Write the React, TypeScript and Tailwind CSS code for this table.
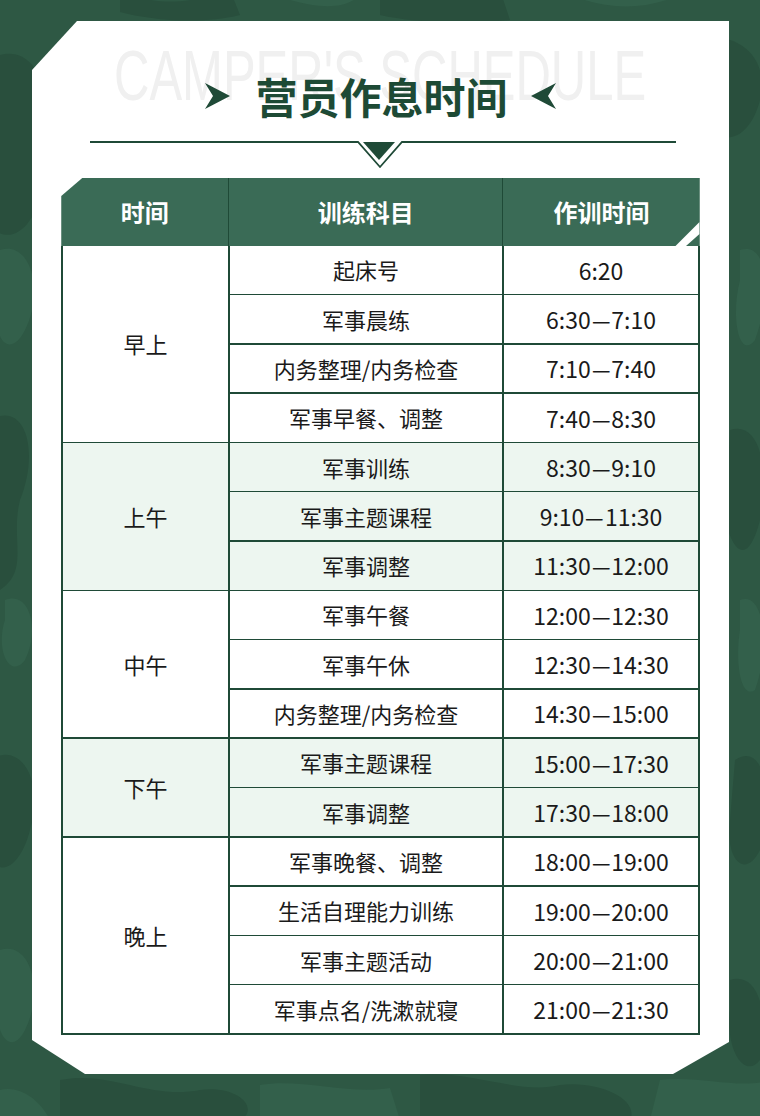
import React from "react";

type Row = { item: string; time: string };
type Group = { label: string; tint: boolean; rows: Row[] };

const groups: Group[] = [
  {
    label: "早上",
    tint: false,
    rows: [
      { item: "起床号", time: "6:20" },
      { item: "军事晨练", time: "6:30—7:10" },
      { item: "内务整理/内务检查", time: "7:10—7:40" },
      { item: "军事早餐、调整", time: "7:40—8:30" },
    ],
  },
  {
    label: "上午",
    tint: true,
    rows: [
      { item: "军事训练", time: "8:30—9:10" },
      { item: "军事主题课程", time: "9:10—11:30" },
      { item: "军事调整", time: "11:30—12:00" },
    ],
  },
  {
    label: "中午",
    tint: false,
    rows: [
      { item: "军事午餐", time: "12:00—12:30" },
      { item: "军事午休", time: "12:30—14:30" },
      { item: "内务整理/内务检查", time: "14:30—15:00" },
    ],
  },
  {
    label: "下午",
    tint: true,
    rows: [
      { item: "军事主题课程", time: "15:00—17:30" },
      { item: "军事调整", time: "17:30—18:00" },
    ],
  },
  {
    label: "晚上",
    tint: false,
    rows: [
      { item: "军事晚餐、调整", time: "18:00—19:00" },
      { item: "生活自理能力训练", time: "19:00—20:00" },
      { item: "军事主题活动", time: "20:00—21:00" },
      { item: "军事点名/洗漱就寝", time: "21:00—21:30" },
    ],
  },
];

const spanClass: Record<number, string> = {
  2: "row-span-2",
  3: "row-span-3",
  4: "row-span-4",
};

function Time({ t }: { t: string }) {
  const parts = t.split("—");
  if (parts.length === 1) return <>{t}</>;
  return (
    <>
      {parts[0]}
      <span className="inline-block scale-x-[0.9] mx-[0px]">—</span>
      {parts[1]}
    </>
  );
}

function Camo() {
  return (
    <svg className="absolute inset-0" width="760" height="1116" viewBox="0 0 760 1116">
      <rect width="760" height="1116" fill="#2e5844" />
      <g fill="#294f3d">
        <path d="M-10 60 C20 40 50 70 40 110 C30 150 60 180 30 220 C10 250 -20 230 -10 200 Z" />
        <path d="M120 -10 C160 10 200 0 230 -10 L240 15 C200 25 150 20 120 12 Z" />
        <path d="M700 40 C740 30 770 60 760 100 C750 140 720 150 705 120 C690 90 690 60 700 40 Z" />
        <path d="M-10 420 C25 400 40 450 20 500 C10 540 30 570 0 590 L-10 590 Z" />
        <path d="M730 430 C760 420 770 470 760 520 C750 560 735 560 725 520 Z" />
        <path d="M-10 760 C20 740 45 780 30 830 C20 870 -5 880 -10 850 Z" />
        <path d="M735 760 C765 740 775 800 760 850 C745 880 725 860 730 820 Z" />
        <path d="M60 1080 C110 1070 150 1100 200 1090 C240 1085 260 1110 240 1120 L60 1120 Z" />
        <path d="M420 1075 C470 1070 520 1095 560 1085 C600 1080 640 1100 630 1120 L420 1120 Z" />
        <path d="M730 980 C760 970 770 1020 760 1060 C745 1080 725 1050 730 1010 Z" />
        <path d="M380 -10 C420 5 470 0 500 -10 L510 20 C460 25 410 22 380 15 Z" />
      </g>
      <g fill="#33604b">
        <path d="M0 250 C30 240 45 290 25 330 C10 360 -10 340 0 300 Z" />
        <path d="M260 -10 C300 5 340 15 360 -5 L370 -10 Z" />
        <path d="M560 -10 C600 10 640 12 680 -5 L690 -10 Z" />
        <path d="M740 250 C770 240 770 300 755 340 C740 360 730 320 740 280 Z" />
        <path d="M5 600 C30 590 40 630 25 660 C10 680 -5 650 5 620 Z" />
        <path d="M740 600 C765 590 770 650 755 690 C740 700 735 660 740 630 Z" />
        <path d="M0 950 C30 940 45 990 25 1030 C10 1060 -10 1030 0 990 Z" />
        <path d="M260 1085 C300 1078 350 1095 390 1088 L400 1120 L260 1120 Z" />
        <path d="M660 1080 C700 1075 740 1090 770 1080 L770 1120 L650 1120 Z" />
        <path d="M0 1090 C20 1085 40 1100 50 1120 L0 1120 Z" />
      </g>
    </svg>
  );
}

function Arrow({ flip }: { flip?: boolean }) {
  return (
    <svg width="25" height="26" viewBox="0 0 25 26" className={flip ? "-scale-x-100" : ""}>
      <polygon points="0,0 25,13 0,26 8,13" fill="#1f4a37" />
    </svg>
  );
}

function Divider() {
  return (
    <svg width="586" height="28" viewBox="0 0 586 28" className="self-start ml-[58px] mt-[15px] block">
      <polyline
        points="0,1 268,1 290,26 312,1 586,1"
        fill="none"
        stroke="#1f4a37"
        strokeWidth="1.8"
      />
      <polygon points="273,1 305,1 289,19" fill="#1f4a37" />
    </svg>
  );
}

export default function App() {
  const cjk = '"Noto Sans CJK SC", "Noto Sans", sans-serif';
  return (
    <div
      className="relative w-[760px] h-[1116px] overflow-hidden bg-[#2e5844] pt-[21px] pl-[32px]"
      style={{ fontFamily: cjk }}
    >
      <Camo />
      <div className="relative w-[697px] h-[1053px] bg-white [clip-path:polygon(45px_0,100%_0,100%_1021px,641px_100%,53px_100%,0_1019px,0_49px)] flex flex-col items-center pt-[45px]">
        <div className="absolute top-[20px] left-0 right-0 flex justify-center">
          <span
            className="block shrink-0 text-[70px] leading-none text-[#f0f0f0] scale-x-[0.7] whitespace-nowrap"
            style={{ fontFamily: '"Liberation Sans", Arial, sans-serif' }}
          >
            CAMPER'S SCHEDULE
          </span>
        </div>
        <div className="relative flex items-center justify-center h-[60px]">
          <Arrow />
          <div className="ml-[25px] mr-[23px] text-[42px] leading-none font-bold text-[#1d4a35]">
            营员作息时间
          </div>
          <Arrow flip />
        </div>
        <Divider />
        <div className="mt-[9px] w-[638.5px] self-start ml-[29.25px]">
          <div className="relative h-[68px] bg-[#3a6b56] [clip-path:polygon(21px_0,100%_0,100%_100%,0_100%,0_18px)] grid grid-cols-[167px_274px_197.5px] text-white text-[24px] font-bold">
            <div className="flex items-center justify-center">时间</div>
            <div className="flex items-center justify-center border-l-[1.5px] border-[#1f4a37]">训练科目</div>
            <div className="flex items-center justify-center border-l-[1.5px] border-[#1f4a37]">作训时间</div>
            <svg className="absolute left-0 top-0" width="638.5" height="68" viewBox="0 0 638.5 68">
              <polygon points="614.5,68 625,68 638.5,56 638.5,44" fill="#ffffff" />
            </svg>
          </div>
          <div className="grid grid-cols-[165.5px_272.5px_194.5px] auto-rows-[47.8px] gap-[1.5px] bg-[#1f4a37] px-[1.5px] pb-[1.5px] text-[22px] text-[#1a1a1a]">
            {groups.map((g) => {
              const bg = g.tint ? "bg-[#edf6f0]" : "bg-white";
              return (
                <React.Fragment key={g.label}>
                  <div className={`${spanClass[g.rows.length]} ${bg} flex items-center justify-center`}>
                    {g.label}
                  </div>
                  {g.rows.map((r, i) => (
                    <React.Fragment key={i}>
                      <div className={`${bg} flex items-center justify-center`}>{r.item}</div>
                      <div className={`${bg} flex items-center justify-center text-[23px]`}>
                        <Time t={r.time} />
                      </div>
                    </React.Fragment>
                  ))}
                </React.Fragment>
              );
            })}
          </div>
        </div>
      </div>
    </div>
  );
}
